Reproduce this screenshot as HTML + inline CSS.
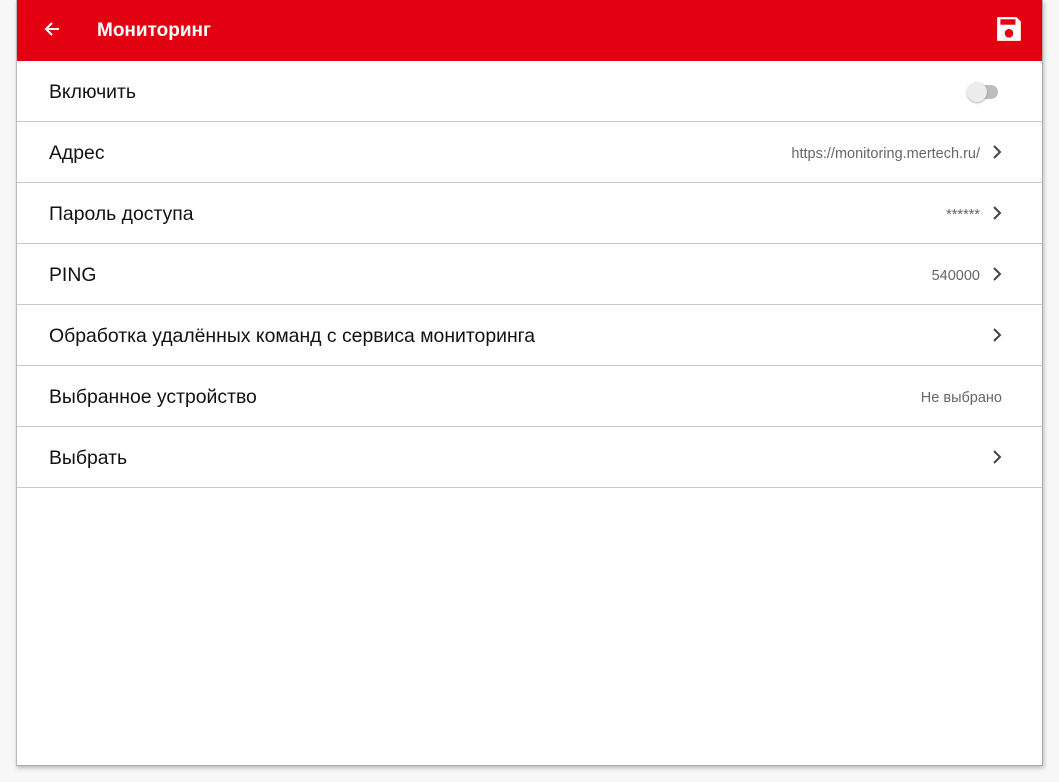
<!DOCTYPE html>
<html><head><meta charset="utf-8"><style>
body{margin:0;width:1059px;height:782px;background:#f7f7f7;font-family:"Liberation Sans",sans-serif;position:relative;overflow:hidden}
.panel{position:absolute;left:16px;top:0;width:1025px;height:765px;background:#fff;border-left:1px solid #bbb;border-right:1px solid #aaa;border-bottom:1px solid #aaa;box-shadow:1px 2px 4px rgba(0,0,0,.25)}
.hdr{height:61px;background:#e30011;position:relative;color:#fff}
.hdr .t{position:absolute;left:80px;top:20px;font-size:19px;font-weight:bold}
.row{height:60px;border-bottom:1px solid #c8c8c8;position:relative}
.row .l{position:absolute;left:32px;top:20px;font-size:19.4px;color:#111}
.row .v{position:absolute;right:62px;top:24px;font-size:14.5px;color:#666}
.row .v.nc{right:40px}
.chev{position:absolute;right:40px;top:22px}
</style></head><body>
<div class="panel">
<div class="hdr">
<svg style="position:absolute;left:26px;top:20px" width="18" height="18" viewBox="0 0 18 18"><path d="M16 9H3M9 3L3 9l6 6" stroke="#fff" stroke-width="2" fill="none"/></svg>
<div class="t">Мониторинг</div>
<svg style="position:absolute;left:978px;top:15px" width="28" height="28" viewBox="0 0 26 26"><path d="M2 2h18l4 4v18H2z" fill="#fff"/><rect x="5" y="4" width="14" height="5" fill="#e30011"/><circle cx="13" cy="17" r="4" fill="#e30011"/></svg>
</div>
<div class="row"><div class="l">Включить</div>
<div style="position:absolute;left:955px;top:24px;width:26px;height:14px;border-radius:7px;background:#bdbdbd"></div>
<div style="position:absolute;left:950px;top:21px;width:20px;height:20px;border-radius:50%;background:#ececec;box-shadow:0 1px 2px rgba(0,0,0,.3)"></div>
</div>
<div class="row"><div class="l">Адрес</div><div class="v">https://monitoring.mertech.ru/</div><svg class="chev" width="10" height="16" viewBox="0 0 10 16"><path d="M2 2l6 6-6 6" stroke="#444" stroke-width="2" fill="none"/></svg></div>
<div class="row"><div class="l">Пароль доступа</div><div class="v">******</div><svg class="chev" width="10" height="16" viewBox="0 0 10 16"><path d="M2 2l6 6-6 6" stroke="#444" stroke-width="2" fill="none"/></svg></div>
<div class="row"><div class="l">PING</div><div class="v">540000</div><svg class="chev" width="10" height="16" viewBox="0 0 10 16"><path d="M2 2l6 6-6 6" stroke="#444" stroke-width="2" fill="none"/></svg></div>
<div class="row"><div class="l">Обработка удалённых команд с сервиса мониторинга</div><svg class="chev" width="10" height="16" viewBox="0 0 10 16"><path d="M2 2l6 6-6 6" stroke="#444" stroke-width="2" fill="none"/></svg></div>
<div class="row"><div class="l">Выбранное устройство</div><div class="v nc">Не выбрано</div></div>
<div class="row"><div class="l">Выбрать</div><svg class="chev" width="10" height="16" viewBox="0 0 10 16"><path d="M2 2l6 6-6 6" stroke="#444" stroke-width="2" fill="none"/></svg></div>
</div>
</body></html>
